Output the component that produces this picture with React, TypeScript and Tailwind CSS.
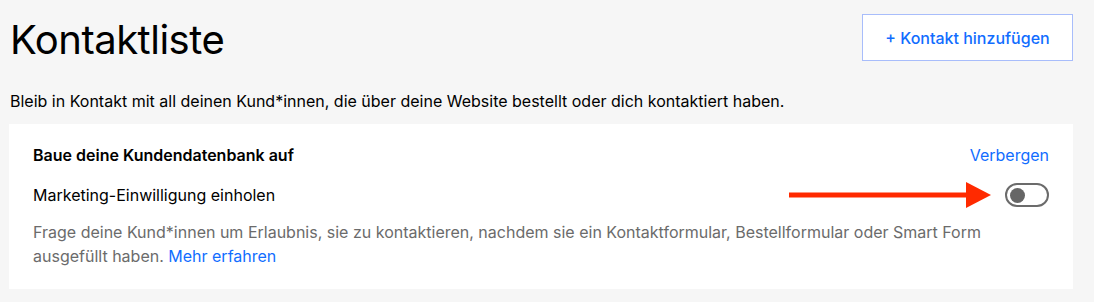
export default function App() {
  return (
    <div className="min-h-screen bg-[#f6f6f6] font-['Inter',sans-serif] text-black">
      <div className="w-[1094px] px-[9px] pt-[14px]">
        <div className="flex items-start justify-between pr-[12px]">
          <h1 className="pl-[1px] pt-[2px] text-[40px] leading-[48px] tracking-[-0.5px]">Kontaktliste</h1>
          <button className="flex h-[47px] w-[211px] items-center justify-center border border-[#a8bdfb] bg-white text-[16px] font-medium text-[#116dff]">
            + Kontakt hinzufügen
          </button>
        </div>
        <p className="mt-[27px] pl-[1px] text-[16px] leading-[20px]">
          Bleib in Kontakt mit all deinen Kund*innen, die über deine Website bestellt oder dich kontaktiert haben.
        </p>
        <div className="mt-[13px] w-[1064px] bg-white px-[24px] pb-[21px] pt-[19px]">
          <div className="flex items-center justify-between">
            <h2 className="text-[16px] font-semibold leading-[24px]">Baue deine Kundendatenbank auf</h2>
            <a className="text-[16px] leading-[24px] text-[#116dff]">Verbergen</a>
          </div>
          <div className="mt-[15px] flex items-center justify-between">
            <span className="text-[16px] leading-[24px]">Marketing-Einwilligung einholen</span>
            <div className="flex items-center">
              <svg width="206" height="26" viewBox="0 0 206 26" className="mr-[10px]">
                <rect x="0" y="10.5" width="180" height="5" fill="#ff2a00" />
                <polygon points="177,0 202,13 177,26" fill="#ff2a00" />
              </svg>
              <div className="flex h-[24px] w-[44px] items-center rounded-full border-2 border-[#6b6b6b] px-[3px]">
                <span className="h-[15px] w-[15px] rounded-full bg-[#666666]" />
              </div>
            </div>
          </div>
          <p className="mt-[12px] text-[16px] leading-[24px] text-[#6b6b6b]">
            Frage deine Kund*innen um Erlaubnis, sie zu kontaktieren, nachdem sie ein Kontaktformular, Bestellformular oder Smart Form ausgefüllt haben.{' '}
            <a className="text-[#116dff]">Mehr erfahren</a>
          </p>
        </div>
      </div>
    </div>
  )
}
